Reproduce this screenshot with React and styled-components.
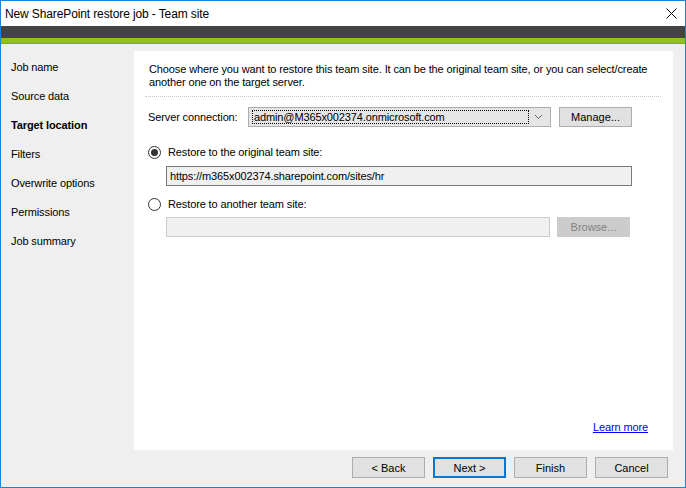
import React from 'react'
import styled, { createGlobalStyle } from 'styled-components'

const GlobalStyle = createGlobalStyle`
  html, body {
    margin: 0;
    padding: 0;
    background: #ffffff;
  }
  * {
    box-sizing: border-box;
  }
`

const font = `"Liberation Sans", Arial, sans-serif`

const Window = styled.div`
  width: 686px;
  height: 488px;
  border: 1px solid #1a84d8;
  display: flex;
  flex-direction: column;
  font-family: ${font};
  font-size: 11px;
  letter-spacing: -0.12px;
  color: #000;
  background: #efefef;
  overflow: hidden;
`

const TitleBar = styled.div`
  height: 25px;
  background: #fff;
  display: flex;
  align-items: center;
  justify-content: space-between;
  padding: 0 8px 0 4px;
  font-size: 12px;
`

const CloseIcon = styled.svg`
  width: 11px;
  height: 11px;
`

const DarkBand = styled.div`
  height: 12px;
  background: #444444;
`

const GreenBand = styled.div`
  height: 6px;
  background: #92c020;
  border-bottom: 1px solid #80aa18;
`

const Body = styled.div`
  flex: 1;
  display: flex;
  flex-direction: column;
  padding-top: 7px;
`

const Main = styled.div`
  display: flex;
  height: 399px;
`

const Sidebar = styled.ul`
  list-style: none;
  margin: 0;
  padding: 8px 0 0 10px;
  width: 133px;
  display: flex;
  flex-direction: column;
  gap: 12px;
`

const NavItem = styled.li`
  height: 17px;
  line-height: 17px;
  font-weight: ${p => (p.$active ? 700 : 400)};
`

const Panel = styled.div`
  width: 539px;
  background: #fff;
  padding: 12px 13px 0 11px;
  display: flex;
  flex-direction: column;
`

const Intro = styled.p`
  margin: 0;
  line-height: 13px;
  padding: 0 0 7px 4px;
  border-bottom: 1px dotted #c8c8c8;
  width: 516px;
`

const ServerRow = styled.div`
  display: flex;
  align-items: center;
  gap: 8px;
  margin-top: 10px;
  padding-left: 3px;
`

const Label = styled.span`
  width: 92px;
  white-space: nowrap;
`

const Combo = styled.div`
  width: 303px;
  height: 20px;
  background: #e5e5e5;
  border: 1px solid #adadad;
  display: flex;
  align-items: center;
  padding: 2px 2px 2px 3px;
`

const ComboText = styled.div`
  flex: 1;
  height: 100%;
  border: 1px dotted #000;
  display: flex;
  align-items: center;
  padding-left: 1px;
`

const ComboArrow = styled.svg`
  width: 19px;
  height: 10px;
`

const Button = styled.button`
  width: 73px;
  height: ${p => (p.$tall ? 21 : 20)}px;
  font-family: ${font};
  font-size: 11px;
  background: ${p => (p.$disabled ? '#cccccc' : '#e1e1e1')};
  color: ${p => (p.$disabled ? '#838383' : '#000')};
  border: ${p => (p.$primary ? '2px solid #0078d7' : p.$disabled ? '1px solid #cccccc' : '1px solid #adadad')};
  padding: 0;
  margin: 0;
`

const RadioRow = styled.label`
  display: flex;
  align-items: center;
  height: 16px;
  gap: 7px;
  padding-left: 3px;
  margin-top: ${p => p.$top}px;
`

const Radio = styled.span`
  width: 13px;
  height: 13px;
  border-radius: 50%;
  border: 1px solid #333;
  background: #fff;
  display: flex;
  align-items: center;
  justify-content: center;
  &::after {
    content: '';
    width: 7px;
    height: 7px;
    border-radius: 50%;
    background: ${p => (p.$checked ? '#333' : 'transparent')};
  }
`

const FieldRow = styled.div`
  display: flex;
  gap: 7px;
  margin-top: ${p => p.$top}px;
  padding-left: 21px;
`

const TextBox = styled.div`
  width: ${p => p.$w}px;
  height: 20px;
  background: #f0f0f0;
  border: 1px solid ${p => (p.$disabled ? '#cccccc' : '#7a7a7a')};
  display: flex;
  align-items: center;
  padding-left: 3px;
`

const Spacer = styled.div`
  flex: 1;
`

const LearnMore = styled.a`
  align-self: flex-end;
  color: #0000ff;
  text-decoration: underline;
  margin: 0 12px 17px 0;
  cursor: pointer;
`

const Footer = styled.div`
  display: flex;
  justify-content: flex-end;
  gap: 8px;
  padding: 7px 17px 0 0;
`

const steps = [
  'Job name',
  'Source data',
  'Target location',
  'Filters',
  'Overwrite options',
  'Permissions',
  'Job summary',
]

export default function App() {
  return (
    <>
      <GlobalStyle />
      <Window>
        <TitleBar>
          <span>New SharePoint restore job - Team site</span>
          <CloseIcon viewBox="0 0 11 11">
            <path d="M0.5 0.5 L10.5 10.5 M10.5 0.5 L0.5 10.5" stroke="#000" strokeWidth="1" />
          </CloseIcon>
        </TitleBar>
        <DarkBand />
        <GreenBand />
        <Body>
          <Main>
            <Sidebar>
              {steps.map(s => (
                <NavItem key={s} $active={s === 'Target location'}>
                  {s}
                </NavItem>
              ))}
            </Sidebar>
            <Panel>
              <Intro>
                Choose where you want to restore this team site. It can be the original team site, or you can
                select/create another one on the target server.
              </Intro>
              <ServerRow>
                <Label>Server connection:</Label>
                <Combo>
                  <ComboText>admin@M365x002374.onmicrosoft.com</ComboText>
                  <ComboArrow viewBox="0 0 19 10">
                    <path d="M6 3 L9.5 6.5 L13 3" stroke="#606060" strokeWidth="1" fill="none" />
                  </ComboArrow>
                </Combo>
                <Button>Manage...</Button>
              </ServerRow>
              <RadioRow $top={17}>
                <Radio $checked />
                <span>Restore to the original team site:</span>
              </RadioRow>
              <FieldRow $top={6}>
                <TextBox $w={466}>https://m365x002374.sharepoint.com/sites/hr</TextBox>
              </FieldRow>
              <RadioRow $top={10}>
                <Radio />
                <span>Restore to another team site:</span>
              </RadioRow>
              <FieldRow $top={5}>
                <TextBox $w={384} $disabled />
                <Button $disabled>Browse...</Button>
              </FieldRow>
              <Spacer />
              <LearnMore>Learn more</LearnMore>
            </Panel>
          </Main>
          <Footer>
            <Button $tall>&lt; Back</Button>
            <Button $tall $primary>Next &gt;</Button>
            <Button $tall>Finish</Button>
            <Button $tall>Cancel</Button>
          </Footer>
        </Body>
      </Window>
    </>
  )
}
